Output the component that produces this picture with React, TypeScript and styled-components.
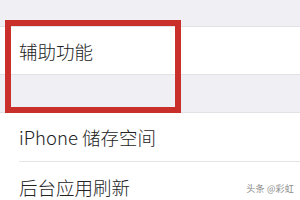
import styled, { createGlobalStyle } from "styled-components";

const GlobalStyle = createGlobalStyle`
  html, body {
    margin: 0;
    padding: 0;
    background: #efeff4;
  }
`;

const Screen = styled.div`
  position: relative;
  width: 300px;
  height: 200px;
  overflow: hidden;
  background: #efeff4;
  font-family: "Noto Sans CJK SC", "Noto Sans", sans-serif;
`;

const Gap = styled.div<{ $height: number }>`
  height: ${(props) => props.$height}px;
  border-bottom: 1px solid #e2e2e6;
  box-sizing: border-box;
`;

const Group = styled.div`
  background: #ffffff;
  border-bottom: 1px solid #e2e2e6;
`;

const Row = styled.div<{ $height: number; $divider?: boolean }>`
  display: flex;
  align-items: center;
  height: ${(props) => props.$height}px;
  margin-left: 19px;
  font-size: 18.5px;
  font-weight: 300;
  color: #222222;
  box-sizing: border-box;
  border-bottom: ${(props) => (props.$divider ? "1px solid #e4e4e8" : "none")};
`;

const Highlight = styled.div`
  position: absolute;
  left: 5px;
  top: 20px;
  width: 176px;
  height: 93px;
  box-sizing: border-box;
  border: 6.5px solid #c9302c;
  pointer-events: none;
`;

const Watermark = styled.div`
  position: absolute;
  right: 6px;
  bottom: 5px;
  font-size: 9px;
  color: #8a8a8a;
  letter-spacing: 0.2px;
`;

export default function App() {
  return (
    <>
      <GlobalStyle />
      <Screen>
        <Gap $height={27} />
        <Group>
          <Row $height={47}>辅助功能</Row>
        </Group>
        <Gap $height={38} />
        <Group>
          <Row $height={49} $divider>
            iPhone 储存空间
          </Row>
          <Row $height={49}>后台应用刷新</Row>
        </Group>
        <Highlight />
        <Watermark>头条 @彩虹</Watermark>
      </Screen>
    </>
  );
}
